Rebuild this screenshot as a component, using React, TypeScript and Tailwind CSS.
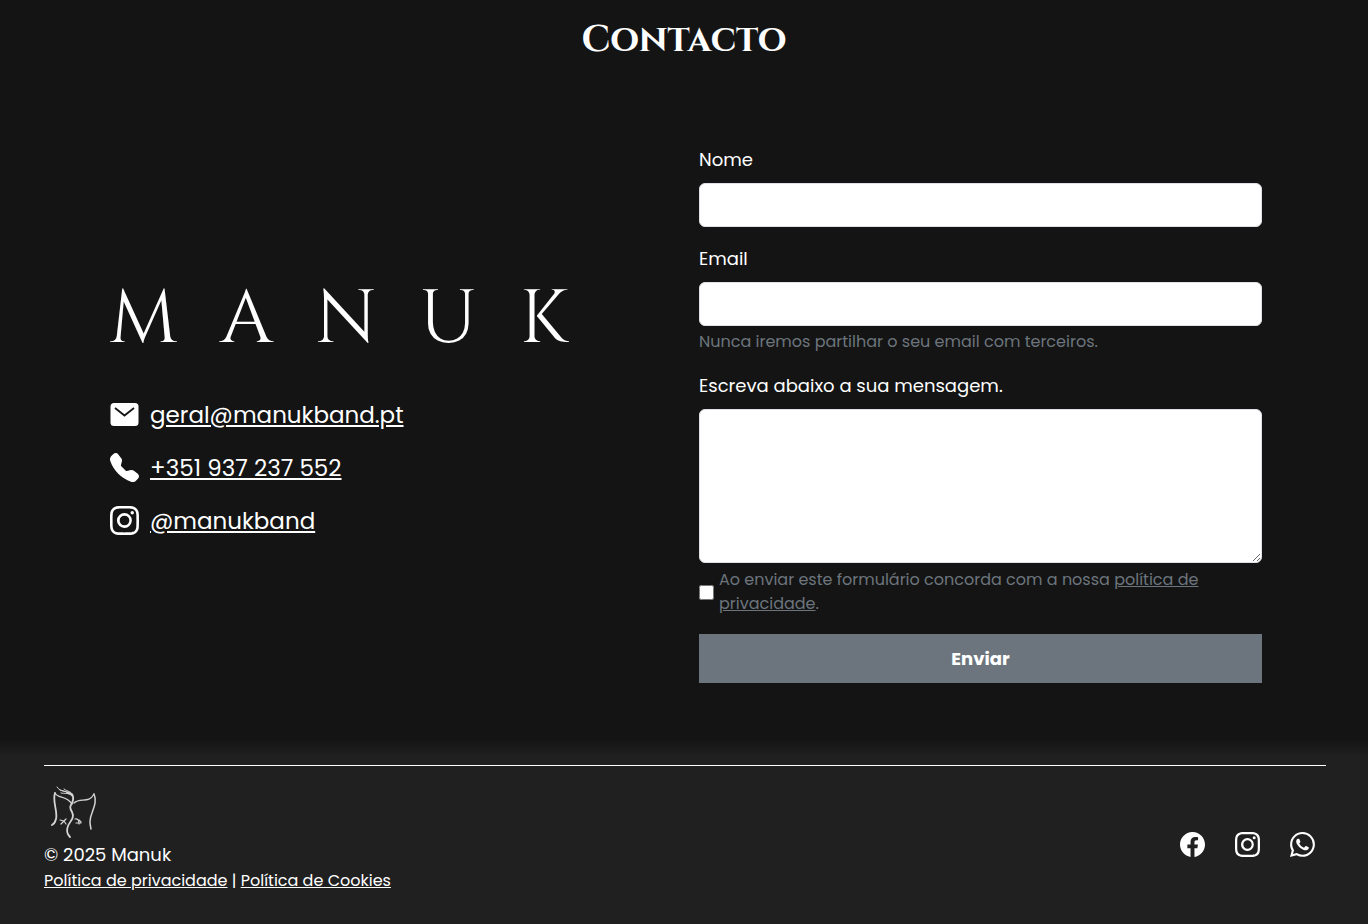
import { useState } from 'react';
import type { FormEvent, ReactNode } from 'react';
import { BsFacebook, BsInstagram, BsTelephoneFill, BsWhatsapp } from 'react-icons/bs';

const inputClass = 'block w-full rounded-md border border-[#dee2e6] bg-white px-3 text-[18px] text-gray-900';
const labelClass = 'mb-[10px] block text-[18px] leading-[27px]';

function MailIcon() {
  return (
    <svg className="h-[29px] w-[29px] shrink-0" viewBox="0 0 29 29" fill="none">
      <rect x="0.5" y="3" width="28" height="23" rx="3.5" fill="white" />
      <path d="M5 8l9.500 7.500L24 8" stroke="#141414" strokeWidth="1.8" />
    </svg>
  );
}

function DragonLogo() {
  return (
    <svg className="mb-[2px] ml-[7px] h-[54px] w-[46px]" viewBox="0 0 46 54" fill="none" stroke="#d4d4d4" strokeLinecap="round" strokeLinejoin="round">
      <path d="M4 8C1 16 7 26 5 34c-1 4-2 5-4 6" strokeWidth="1.8" />
      <path d="M4 8c3 6 11 2 17 11" strokeWidth="1.3" />
      <path d="M6 2c4 6 9 3 15 7M9 5l7 2M13 4c4 3 7 2 9 6M10 8c4 1 7-1 11 3" strokeWidth="1" />
      <path d="M16 8c4 0 7 2 6 7-1 6-5 5-1 12 3 6-2 9-4 14-2 5-1 8 2 11" strokeWidth="1.8" />
      <path d="M23 18c6-6 15 1 20-9" strokeWidth="1.2" />
      <path d="M43 9c3 7 0 13-2 19-3 7-2 11-1 16" strokeWidth="1.5" />
      <path d="M15 34l-2 2-4-1m4 1l-3 3m3-3l2 3M24 34c3-1 4 2 4 5M25 38l5 0m-2-3l2 2" strokeWidth="1.2" />
    </svg>
  );
}

function ContactLink({ icon, href, children }: { icon: ReactNode; href: string; children: ReactNode }) {
  return (
    <li className="flex items-center gap-[11px]">
      {icon}
      <a href={href} className="text-[23px] leading-[36px] underline">{children}</a>
    </li>
  );
}

function ContactForm() {
  const [accepted, setAccepted] = useState(false);

  const handleSubmit = (e: FormEvent) => {
    e.preventDefault();
  };

  return (
    <form onSubmit={handleSubmit}>
      <div className="mb-[18px]">
        <label htmlFor="name" className={labelClass}>Nome</label>
        <input id="name" type="text" className={`${inputClass} h-[44px]`} />
      </div>
      <div className="mb-[18px]">
        <label htmlFor="email" className={labelClass}>Email</label>
        <input id="email" type="email" aria-describedby="email-help" className={`${inputClass} h-[44px]`} />
        <p id="email-help" className="mt-1 text-[16px] leading-[24px] text-[#6c757d]">Nunca iremos partilhar o seu email com terceiros.</p>
      </div>
      <div>
        <label htmlFor="message" className={labelClass}>Escreva abaixo a sua mensagem.</label>
        <textarea id="message" className={`${inputClass} h-[154px] resize-y py-2`} />
      </div>
      <div className="mt-[5px] mb-[18px] flex items-center gap-[5px]">
        <input id="terms" type="checkbox" checked={accepted} onChange={(e) => setAccepted(e.target.checked)} className="h-[15px] w-[15px] shrink-0" />
        <label htmlFor="terms" className="max-w-[500px] text-[16px] leading-[24px] text-[#6c757d]">
          Ao enviar este formulário concorda com a nossa <a href="#privacidade" className="underline">política de privacidade</a>.
        </label>
      </div>
      <button type="submit" className="h-[49px] w-full bg-[#6c757d] text-[18px] font-bold">Enviar</button>
    </form>
  );
}

export default function App() {
  return (
    <div className="min-h-screen bg-[#202020] font-['Poppins','Inter',sans-serif] text-white">
      <main className="bg-[#141414] pb-[56px]">
        <h1 className="pt-4 text-center font-['Cinzel','Liberation_Serif',serif] text-[37px] leading-[48px] font-bold">Contacto</h1>
        <section className="grid grid-cols-2 items-center gap-[27px] pt-[82px] pr-[106px] pl-[109px]">
          <div className="pb-4">
            <h2 aria-label="Manuk" className="flex max-w-[459px] justify-between font-['Cinzel','Liberation_Serif',serif] text-[74px] leading-[90px] font-medium">
              <span>M</span>
              <span>A</span>
              <span>N</span>
              <span>U</span>
              <span>K</span>
            </h2>
            <ul className="mt-8 flex flex-col gap-[17px] pl-px">
              <ContactLink icon={<MailIcon />} href="mailto:geral@manukband.pt">geral@manukband.pt</ContactLink>
              <ContactLink icon={<BsTelephoneFill className="h-[29px] w-[29px] shrink-0" />} href="tel:+351937237552">+351 937 237 552</ContactLink>
              <ContactLink icon={<BsInstagram className="h-[29px] w-[29px] shrink-0" />} href="#instagram">@manukband</ContactLink>
            </ul>
          </div>
          <ContactForm />
        </section>
      </main>

      <div className="h-[18px] bg-linear-to-b from-[#141414] to-[#202020]" />
      <footer className="pt-2 pr-[42px] pl-[44px]">
        <div className="flex items-center justify-between border-t border-white pt-[19px] pb-7">
          <div>
            <DragonLogo />
            <p className="text-[18px] leading-[27px]">© 2025 Manuk</p>
            <p className="text-[16px] leading-[26px]">
              <a href="#privacidade" className="underline">Política de privacidade</a> | <a href="#cookies" className="underline">Política de Cookies</a>
            </p>
          </div>
          <div className="flex gap-[30px] pt-[10px] pr-[11px]">
            <a href="#facebook" aria-label="Facebook"><BsFacebook className="h-[25px] w-[25px]" /></a>
            <a href="#instagram" aria-label="Instagram"><BsInstagram className="h-[25px] w-[25px]" /></a>
            <a href="#whatsapp" aria-label="WhatsApp"><BsWhatsapp className="h-[25px] w-[25px]" /></a>
          </div>
        </div>
      </footer>
    </div>
  );
}
